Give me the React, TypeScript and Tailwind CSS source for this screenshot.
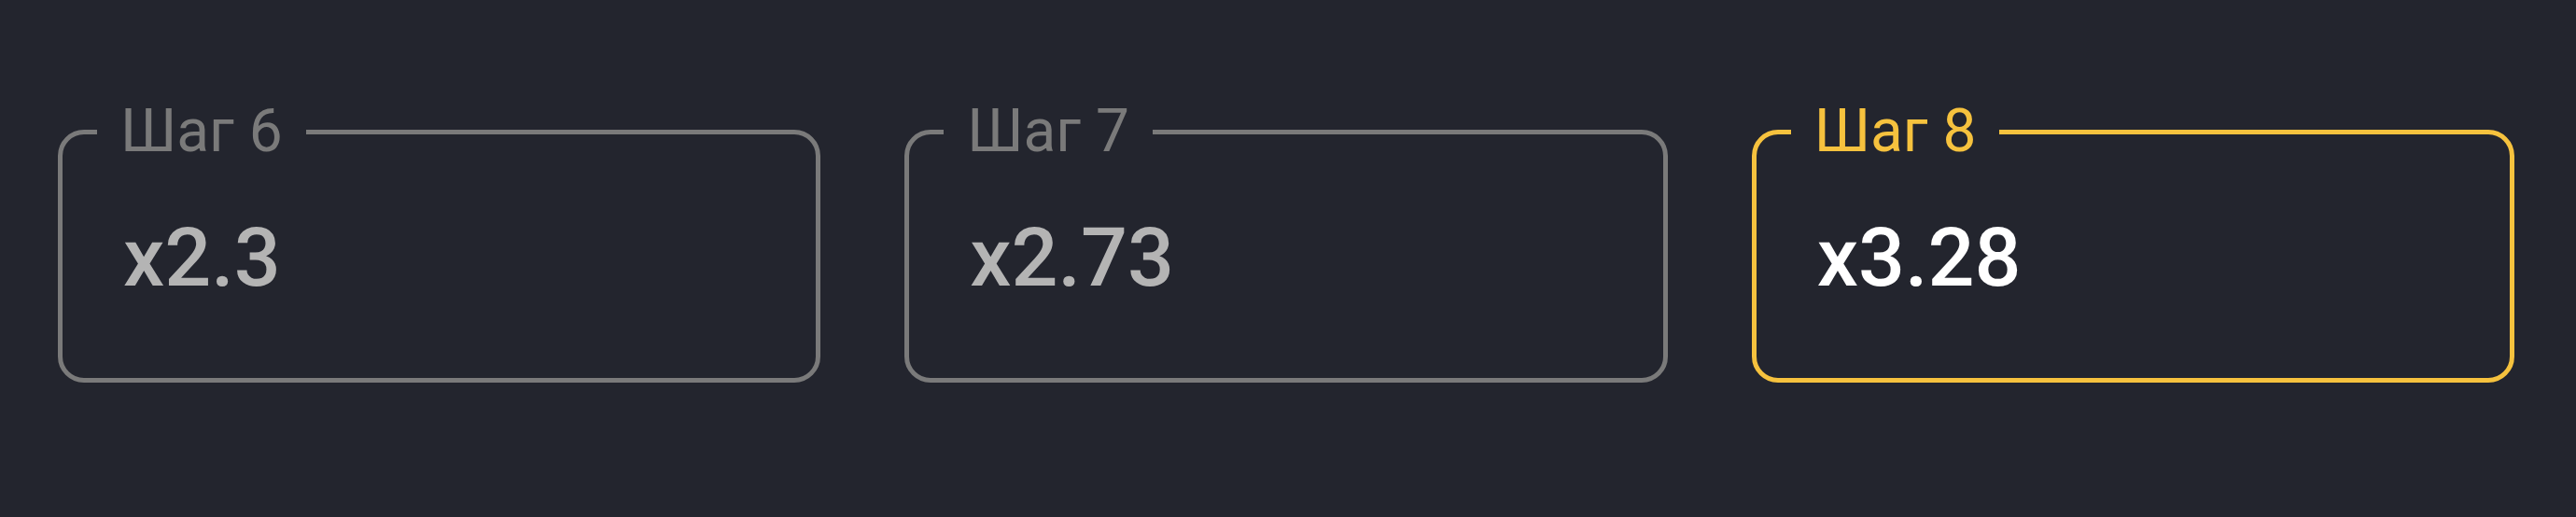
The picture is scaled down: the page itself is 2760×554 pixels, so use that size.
const steps = [
  { step: 6, value: "x2.3", active: false },
  { step: 7, value: "x2.73", active: false },
  { step: 8, value: "x3.28", active: true },
];

function StepCard({ step, value, active }: { step: number; value: string; active: boolean }) {
  return (
    <fieldset
      className={
        "min-w-0 border-[5px] rounded-[28px] pt-[59px] pb-[85px] " +
        (active ? "border-[#f6c23e]" : "border-[#7a7a7a]")
      }
    >
      <legend
        className={
          "ml-[37px] px-[25px] text-[64px] leading-none font-normal " +
          (active ? "text-[#f6c23e]" : "text-[#7a7a7a]")
        }
      >
        Шаг {step}
      </legend>
      <div
        className={
          "h-[88px] pl-[65px] text-[88px] leading-none font-medium " +
          (active ? "text-white" : "text-[#b4b4b4]")
        }
      >
        {value}
      </div>
    </fieldset>
  );
}

export default function App() {
  return (
    <div className="w-[2760px] h-[554px] bg-[#23252e] font-['Roboto',_'Liberation_Sans',_sans-serif]">
      <div className="grid grid-cols-3 gap-[90px] pl-[62px] pr-[66px] pt-[109px]">
        {steps.map((s) => (
          <StepCard key={s.step} {...s} />
        ))}
      </div>
    </div>
  );
}
